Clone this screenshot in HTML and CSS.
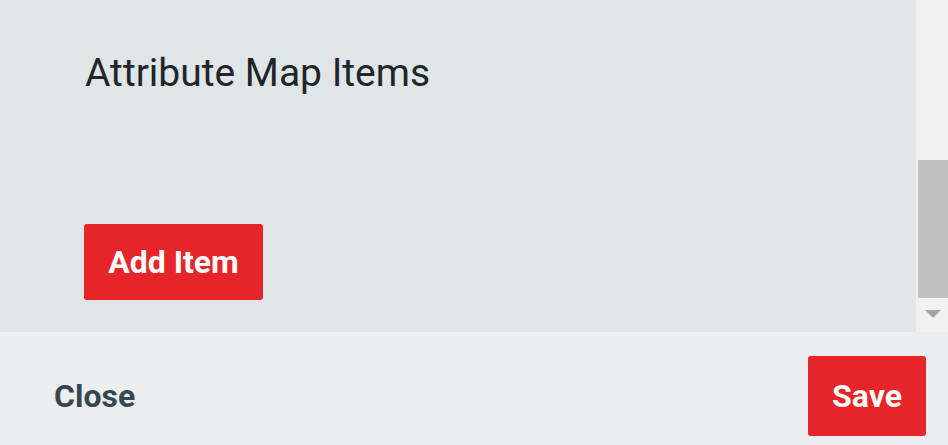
FILE: index.html
```html
<!DOCTYPE html>
<html>
<head>
<meta charset="utf-8">
<link rel="stylesheet" href="styles.css">
</head>
<body>
<div class="page">
  <div class="top">
    <div class="content">
      <h2 class="title">Attribute Map Items</h2>
      <button class="btn add">Add Item</button>
    </div>
    <div class="scrollbar">
      <div class="thumb"></div>
      <div class="arrow-area"><div class="arrow"></div></div>
    </div>
  </div>
  <div class="footer">
    <button class="link-btn">Close</button>
    <button class="btn save">Save</button>
  </div>
</div>
</body>
</html>
```

FILE: styles.css
```css
html, body {
  margin: 0;
  padding: 0;
  overflow: hidden;
  font-family: Roboto, "Liberation Sans", sans-serif;
}
.page {
  width: 948px;
  height: 445px;
  display: flex;
  flex-direction: column;
}
.top {
  height: 332px;
  display: flex;
  flex-shrink: 0;
}
.content {
  flex: 1;
  background: #e0e5e8;
  padding-left: 85px;
}
.title {
  margin: 50px 0 0 0;
  font-size: 39px;
  line-height: 46px;
  font-weight: 400;
  color: #212529;
}
.btn {
  border: none;
  border-radius: 3px;
  background: #e62429;
  color: #fff;
  font-family: Roboto, "Liberation Sans", sans-serif;
  font-weight: 700;
  font-size: 32px;
  cursor: pointer;
}
.add {
  margin-top: 128px;
  margin-left: -1px;
  width: 179px;
  height: 76px;
  padding: 0;
}
.scrollbar {
  width: 32px;
  background: #f1f1f1;
  display: flex;
  flex-direction: column;
  align-items: flex-end;
  padding-top: 160px;
  box-sizing: border-box;
}
.thumb {
  width: 30px;
  height: 138px;
  background: #c1c1c1;
}
.arrow-area {
  width: 30px;
  display: flex;
  justify-content: center;
  padding-top: 12px;
}
.arrow {
  width: 0;
  height: 0;
  border-left: 8px solid transparent;
  border-right: 8px solid transparent;
  border-top: 8px solid #a3a3a3;
}
.footer {
  flex: 1;
  background: #ebeef1;
  display: flex;
  justify-content: space-between;
  align-items: flex-start;
  padding: 24px 22px 0 54px;
}
.link-btn {
  border: none;
  background: none;
  padding: 0;
  margin-top: 22px;
  font-family: Roboto, "Liberation Sans", sans-serif;
  font-weight: 700;
  font-size: 32px;
  line-height: 36px;
  color: #37474f;
}
.save {
  width: 118px;
  height: 80px;
  padding: 0;
}
```
